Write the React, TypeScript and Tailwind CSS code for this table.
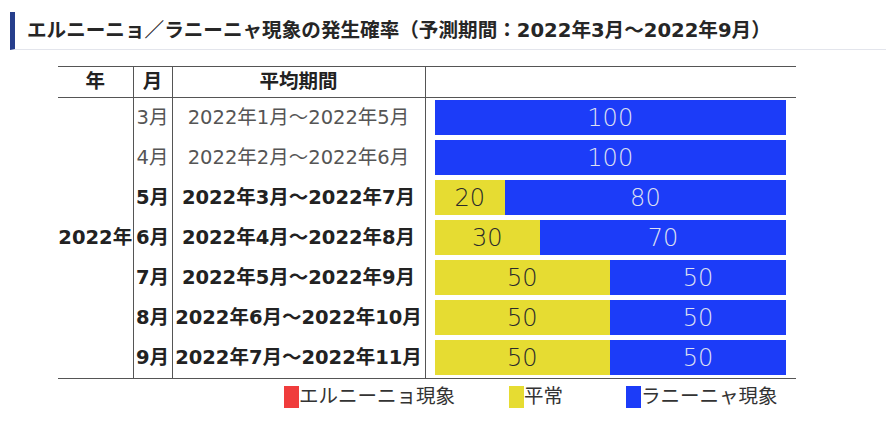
import React from 'react';

type Row = {
  month: string;
  period: string;
  normal: number;
  lanina: number;
  bold: boolean;
};

const rows: Row[] = [
  { month: '3月', period: '2022年1月～2022年5月', normal: 0, lanina: 100, bold: false },
  { month: '4月', period: '2022年2月～2022年6月', normal: 0, lanina: 100, bold: false },
  { month: '5月', period: '2022年3月～2022年7月', normal: 20, lanina: 80, bold: true },
  { month: '6月', period: '2022年4月～2022年8月', normal: 30, lanina: 70, bold: true },
  { month: '7月', period: '2022年5月～2022年9月', normal: 50, lanina: 50, bold: true },
  { month: '8月', period: '2022年6月～2022年10月', normal: 50, lanina: 50, bold: true },
  { month: '9月', period: '2022年7月～2022年11月', normal: 50, lanina: 50, bold: true },
];

const jp = "font-['DejaVu_Sans','Noto_Sans_CJK_JP',sans-serif]";
const num = "font-['DejaVu_Sans','Inter',sans-serif]";

const Bar: React.FC<{ normal: number; lanina: number }> = ({ normal, lanina }) => (
  <div className={`flex h-[35px] w-full ${num} text-[24px] font-extralight`}>
    {normal > 0 && (
      <div
        className="flex items-center justify-center bg-[#e6dc32] text-[#2a2a2a]"
        style={{ width: `${normal}%` }}
      >
        {normal}
      </div>
    )}
    {lanina > 0 && (
      <div
        className="flex items-center justify-center bg-[#1c3cf8] text-[#dfe0f2]"
        style={{ width: `${lanina}%` }}
      >
        {lanina}
      </div>
    )}
  </div>
);

const LegendItem: React.FC<{ color: string; label: string; className?: string }> = ({
  color,
  label,
  className = '',
}) => (
  <div className={`flex items-center ${className}`}>
    <span className={`inline-block h-[22px] w-[15px] ${color}`} />
    <span className="text-[19.5px] leading-none text-[#333]">{label}</span>
  </div>
);

export default function App() {
  return (
    <div className={`h-[425px] w-[886px] overflow-hidden bg-white ${jp}`}>
      <div className="ml-[10px] mt-3 flex h-[38px] items-center border-b border-l-[5px] border-b-[#e3e5ec] border-l-[#263e8c] pl-3">
        <h2 className="text-[19.6px] font-bold text-[#262626]">
          エルニーニョ／ラニーニャ現象の発生確率（予測期間：2022年3月～2022年9月）
        </h2>
      </div>

      <table className="ml-[58px] mt-[16px] table-fixed border-collapse text-[19.5px] leading-none">
        <colgroup>
          <col className="w-[75px]" />
          <col className="w-[39px]" />
          <col className="w-[253px]" />
          <col className="w-[371px]" />
        </colgroup>
        <thead>
          <tr className="h-[31px] border-y-[1.5px] border-[#555]">
            <th className="border-r border-[#555] font-bold text-[#222]">年</th>
            <th className="border-r border-[#555] font-bold text-[#222]">月</th>
            <th className="border-r border-[#555] font-bold text-[#222]">平均期間</th>
            <th />
          </tr>
        </thead>
        <tbody className="border-b-[1.5px] border-[#555]">
          {rows.map((row, i) => (
            <tr key={row.month} className="h-[40px]">
              {i === 0 && (
                <td
                  rowSpan={rows.length}
                  className="border-r border-[#555] text-center font-bold text-[#222]"
                >
                  2022年
                </td>
              )}
              <td
                className={`border-r border-[#555] text-center ${
                  row.bold ? 'font-bold text-[#222]' : 'font-normal text-[#555]'
                }`}
              >
                {row.month}
              </td>
              <td
                className={`whitespace-nowrap border-r border-[#555] text-center ${
                  row.bold ? 'font-bold text-[#222]' : 'font-normal text-[#555]'
                }`}
              >
                {row.period}
              </td>
              <td className="pb-[3px] pl-[9px] pr-[10px] pt-[2px]">
                <Bar normal={row.normal} lanina={row.lanina} />
              </td>
            </tr>
          ))}
        </tbody>
      </table>

      <div className="ml-[284px] mt-[7px] flex">
        <LegendItem color="bg-[#f03c3c]" label="エルニーニョ現象" />
        <LegendItem color="bg-[#e6dc32]" label="平常" className="ml-[54px]" />
        <LegendItem color="bg-[#1c3cf8]" label="ラニーニャ現象" className="ml-[63px]" />
      </div>
    </div>
  );
}
